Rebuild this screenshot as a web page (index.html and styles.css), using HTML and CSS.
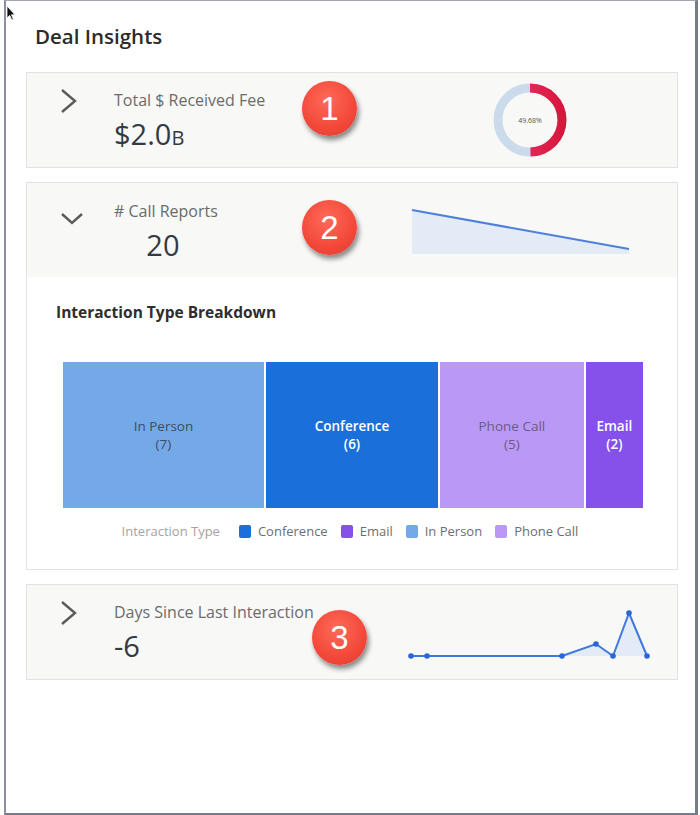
FILE: index.html
```html
<!DOCTYPE html>
<html lang="en">
<head>
    <meta charset="UTF-8">
    <meta name="viewport" content="width=device-width, initial-scale=1.0">
    <title>Deal Insights</title>
    <link rel="stylesheet" href="styles.css">
</head>
<body>
    <div class="window">
        <!-- mouse pointer -->
        <svg class="cursor" width="10" height="16" viewBox="0 0 10 16">
            <path d="M1 1 L1 13 L3.8 10.4 L5.8 15 L7.4 14.3 L5.5 9.8 L9 9.8 Z" fill="#111" stroke="#fff" stroke-width="0.8"/>
        </svg>

        <div class="panel">
            <h2 class="panel-title">Deal Insights</h2>

            <!-- Total received fee -->
            <div class="card">
                <div class="card-head">
                    <div class="chevron">
                        <svg width="18" height="26" viewBox="0 0 18 26"><path d="M2 2 L15 13 L2 24" fill="none" stroke="#5a5a5a" stroke-width="2.4"/></svg>
                    </div>
                    <div class="kpi">
                        <div class="kpi-label">Total $ Received Fee</div>
                        <div class="kpi-value">$2.0<span class="unit">B</span></div>
                    </div>
                    <div class="kpi-chart">
                        <svg width="80" height="80" viewBox="0 0 80 80">
                            <defs>
                                <linearGradient id="arcGrad" x1="0" y1="0" x2="0" y2="1">
                                    <stop offset="0" stop-color="#ec3670"/>
                                    <stop offset="1" stop-color="#d8173c"/>
                                </linearGradient>
                            </defs>
                            <circle cx="40" cy="40" r="32" fill="none" stroke="#cbdbec" stroke-width="9"/>
                            <circle cx="40" cy="40" r="32" fill="none" stroke="url(#arcGrad)" stroke-width="9"
                                    stroke-dasharray="99.9 201.1" transform="rotate(-90 40 40)"/>
                            <text x="40" y="42.5" text-anchor="middle" class="donut-text">49.68%</text>
                        </svg>
                    </div>
                    <div class="badge badge-1">1</div>
                </div>
            </div>

            <!-- Call reports (expanded) -->
            <div class="card">
                <div class="card-head">
                    <div class="chevron">
                        <svg class="chev-down" width="24" height="14" viewBox="0 0 24 14"><path d="M2 2 L12 11 L22 2" fill="none" stroke="#5a5a5a" stroke-width="2.4"/></svg>
                    </div>
                    <div class="kpi">
                        <div class="kpi-stack">
                            <div class="kpi-label">#&nbsp;Call Reports</div>
                            <div class="kpi-value">20</div>
                        </div>
                    </div>
                    <div class="kpi-chart">
                        <svg class="spark" width="222" height="48" viewBox="0 0 222 48">
                            <polygon points="3,2 220,41 220,46 3,46" fill="#e3ebf7"/>
                            <line x1="3" y1="2" x2="220" y2="41" stroke="#4d7fdc" stroke-width="2"/>
                        </svg>
                    </div>
                    <div class="badge badge-2">2</div>
                </div>

                <div class="card-body">
                    <h3 class="section-title">Interaction Type Breakdown</h3>
                    <div class="treemap">
                        <div class="tile tile-person" style="flex-grow: 7">In Person<br>(7)</div>
                        <div class="tile tile-conference" style="flex-grow: 6">Conference<br>(6)</div>
                        <div class="tile tile-phone" style="flex-grow: 5">Phone Call<br>(5)</div>
                        <div class="tile tile-email" style="flex-grow: 2">Email<br>(2)</div>
                    </div>
                    <div class="legend">
                        <span class="legend-title">Interaction Type</span>
                        <span class="legend-item"><i class="swatch sw-conference"></i>Conference</span>
                        <span class="legend-item"><i class="swatch sw-email"></i>Email</span>
                        <span class="legend-item"><i class="swatch sw-person"></i>In Person</span>
                        <span class="legend-item"><i class="swatch sw-phone"></i>Phone Call</span>
                    </div>
                </div>
            </div>

            <!-- Days since last interaction -->
            <div class="card">
                <div class="card-head">
                    <div class="chevron">
                        <svg width="18" height="26" viewBox="0 0 18 26"><path d="M2 2 L15 13 L2 24" fill="none" stroke="#5a5a5a" stroke-width="2.4"/></svg>
                    </div>
                    <div class="kpi">
                        <div class="kpi-label">Days Since Last Interaction</div>
                        <div class="kpi-value">-6</div>
                    </div>
                    <div class="kpi-chart">
                        <svg class="trend" width="244" height="54" viewBox="0 0 244 54">
                            <polygon points="3,49 19,49 154,49 188,37 205,49 221,6 239,49" fill="#e3ebf7"/>
                            <polyline points="3,49 19,49 154,49 188,37 205,49 221,6 239,49" fill="none" stroke="#3f78dc" stroke-width="2"/>
                            <g fill="#2a66d6">
                                <circle cx="3" cy="49" r="2.8"/>
                                <circle cx="19" cy="49" r="2.8"/>
                                <circle cx="154" cy="49" r="2.8"/>
                                <circle cx="188" cy="37" r="2.8"/>
                                <circle cx="205" cy="49" r="2.8"/>
                                <circle cx="221" cy="6" r="2.8"/>
                                <circle cx="239" cy="49" r="2.8"/>
                            </g>
                        </svg>
                    </div>
                    <div class="badge badge-3">3</div>
                </div>
            </div>
        </div>
    </div>
</body>
</html>
```

FILE: styles.css
```css
body {
    margin: 0;
    padding: 0;
    background: #ffffff;
    font-family: "Open Sans", Arial, sans-serif;
    color: #333;
}
.window {
    position: relative;
    box-sizing: border-box;
    width: 694px;
    height: 815px;
    margin-left: 4px;
    background: #ffffff;
    border-left: 2px solid #8b919c;
    border-top: 1px solid #a3a8b0;
    border-right: 3px solid #767c89;
    border-bottom: 2px solid #767c89;
}
.cursor {
    position: absolute;
    left: 0;
    top: 4px;
}
.panel {
    padding: 23px 17px 0 20px;
}
.panel-title {
    margin: 0 0 24px 9px;
    font-size: 20.5px;
    line-height: 24px;
    font-weight: 600;
    color: #2b2b2b;
}
.card {
    border: 1px solid #e2e2e2;
    background: #ffffff;
    margin-bottom: 14px;
}
.card-head {
    position: relative;
    display: flex;
    align-items: flex-start;
    height: 94px;
    padding-left: 33px;
    background: #f8f8f7;
}
.chevron {
    width: 54px;
    padding-top: 15px;
}
.chevron .chev-down {
    margin-top: 14px;
}
.kpi {
    width: 294px;
    padding-top: 17px;
}
.kpi-stack {
    display: inline-flex;
    flex-direction: column;
    align-items: center;
}
.kpi-stack .kpi-value {
    margin-right: 6px;
}
.kpi-label {
    font-size: 16px;
    line-height: 20px;
    color: #6b6b6b;
}
.kpi-value {
    margin-top: 8px;
    font-size: 29px;
    line-height: 32px;
    color: #333a44;
}
.kpi-value .unit {
    font-size: 20px;
}
.kpi-chart {
    width: 244px;
    height: 94px;
    display: flex;
    justify-content: center;
    align-items: center;
}
.kpi-chart .spark {
    margin: 4px 0 0 -21px;
}
.kpi-chart .trend {
    margin-top: 4px;
}
.donut-text {
    font-family: "Open Sans", Arial, sans-serif;
    font-size: 7px;
    fill: #555;
}
.badge {
    position: absolute;
    width: 55px;
    height: 55px;
    border-radius: 50%;
    background: radial-gradient(circle at 45% 35%, #ff6a58 0%, #f2483a 60%, #dd3a2c 100%);
    box-shadow: 2px 4px 5px rgba(0, 0, 0, 0.45);
    color: #ffffff;
    font-family: "Liberation Sans", Arial, sans-serif;
    font-size: 33px;
    line-height: 55px;
    text-align: center;
}
.badge-1 {
    left: 275px;
    top: 8px;
}
.badge-2 {
    left: 275px;
    top: 17px;
}
.badge-3 {
    left: 285px;
    top: 25px;
}
.card-body {
    padding: 25px 34px 29px 36px;
}
.section-title {
    margin: 0 0 40px -7px;
    font-size: 15.5px;
    line-height: 20px;
    font-weight: 700;
    color: #2e2e2e;
}
.treemap {
    display: flex;
    gap: 2px;
    height: 146px;
}
.tile {
    flex-basis: 0;
    display: flex;
    align-items: center;
    justify-content: center;
    text-align: center;
    font-size: 13.5px;
    line-height: 18px;
}
.tile-person {
    background: #74a9e7;
    color: #3e4d63;
}
.tile-conference {
    background: #1b6fd8;
    color: #ffffff;
    font-weight: 600;
}
.tile-phone {
    background: #b998f6;
    color: #6a5a8a;
}
.tile-email {
    background: #8650ea;
    color: #ffffff;
    font-weight: 600;
}
.legend {
    display: flex;
    justify-content: center;
    align-items: center;
    gap: 13px;
    margin-top: 14px;
    margin-left: -6px;
    font-size: 13px;
    line-height: 18px;
    color: #6e6e6e;
}
.legend-title {
    color: #a3a3a3;
    margin-right: 6px;
}
.legend-item {
    display: flex;
    align-items: center;
    gap: 7px;
}
.swatch {
    width: 12px;
    height: 13px;
    border-radius: 2px;
}
.sw-conference { background: #1b6fd8; }
.sw-email { background: #8650ea; }
.sw-person { background: #74a9e7; }
.sw-phone { background: #b998f6; }
```
